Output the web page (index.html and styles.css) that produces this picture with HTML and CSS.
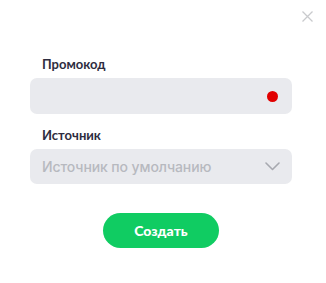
FILE: index.html
```html
<!DOCTYPE html>
<html lang="ru">
<head>
<meta charset="utf-8">
<link rel="stylesheet" href="styles.css">
</head>
<body>
<div class="modal">
  <div class="close-row">
    <button class="close" aria-label="Закрыть">
      <svg width="11" height="11" viewBox="0 0 11 11"><path d="M0.5 0.5L10.5 10.5M10.5 0.5L0.5 10.5" stroke="#c9cacd" stroke-width="1.3" fill="none"/></svg>
    </button>
  </div>
  <div class="field first">
    <div class="label">Промокод</div>
    <div class="input">
      <span class="dot"></span>
    </div>
  </div>
  <div class="field">
    <div class="label">Источник</div>
    <div class="input select">
      <span class="placeholder">Источник по умолчанию</span>
      <svg class="chev" width="15" height="9" viewBox="0 0 15 9"><path d="M1 1L7.5 7.5L14 1" stroke="#a7a9b0" stroke-width="1.6" fill="none" stroke-linecap="round" stroke-linejoin="round"/></svg>
    </div>
  </div>
  <div class="actions">
    <button class="create">Создать</button>
  </div>
</div>
</body>
</html>
```
FILE: styles.css
```css
html, body {
  margin: 0;
  padding: 0;
  background: #ffffff;
}
.modal {
  width: 326px;
  height: 283px;
  box-sizing: border-box;
  padding: 11px 34px 0 30px;
  font-family: Lato, "Noto Sans", sans-serif;
}
.close-row {
  display: flex;
  justify-content: flex-end;
  margin-right: -21px;
  height: 11px;
}
.close {
  border: 0;
  padding: 0;
  background: none;
  width: 11px;
  height: 11px;
  display: block;
}
.close svg { display: block; }
.field.first { margin-top: 34px; }
.field + .field { margin-top: 13px; }
.label {
  margin-left: 12px;
  font-size: 13px;
  font-weight: 700;
  line-height: 16px;
  color: #2e2d40;
  margin-bottom: 6px;
}
.input {
  height: 36px;
  border-radius: 7px;
  background: #e9eaee;
  display: flex;
  align-items: center;
  justify-content: flex-end;
  padding: 0 14px 0 12px;
}
.dot {
  width: 11px;
  height: 11px;
  border-radius: 50%;
  background: #e10000;
}
.select {
  height: 35px;
  justify-content: space-between;
  padding-right: 12px;
}
.placeholder {
  font-family: Inter, Lato, sans-serif;
  font-size: 14px;
  font-weight: 500;
  color: #b7b9bf;
  letter-spacing: -0.1px;
}
.chev { display: block; }
.actions {
  display: flex;
  justify-content: center;
  margin-top: 29px;
}
.create {
  width: 116px;
  height: 35px;
  border: 0;
  border-radius: 18px;
  background: #10cc62;
  color: #ffffff;
  font-family: Lato, "Noto Sans", sans-serif;
  font-size: 14px;
  font-weight: 900;
}
```
